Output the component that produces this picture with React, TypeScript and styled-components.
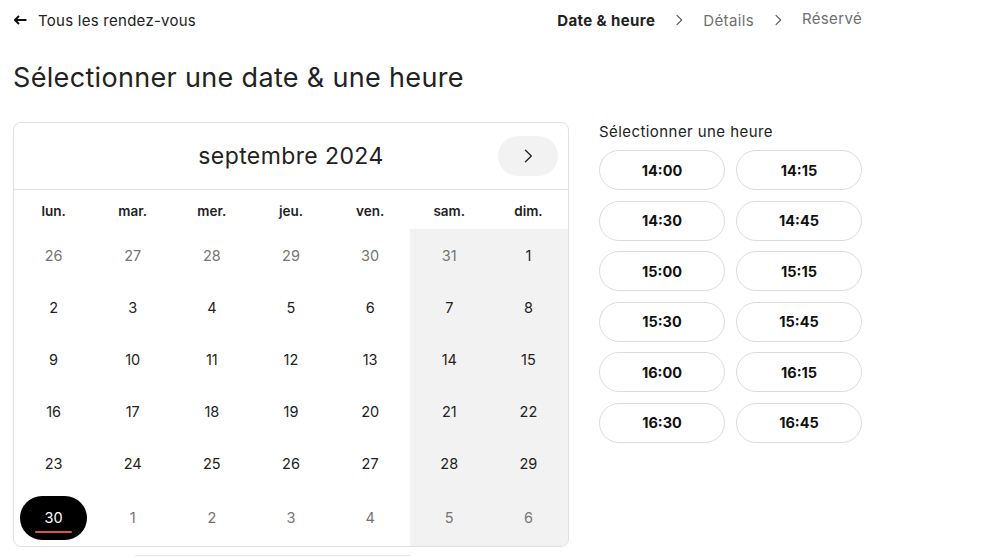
import React from "react";
import styled, { createGlobalStyle } from "styled-components";

const GlobalStyle = createGlobalStyle`
  html, body { margin: 0; padding: 0; background: #ffffff; }
  body { font-family: Inter, "Noto Sans", "Liberation Sans", sans-serif; color: #222; }
  * { box-sizing: border-box; }
`;

const Page = styled.div`
  width: 849px;
  margin-left: 13px;
  padding-top: 6px;
`;

const TopBar = styled.div`
  display: flex;
  justify-content: space-between;
  align-items: center;
  height: 28px;
`;

const BackLink = styled.a`
  display: flex;
  align-items: center;
  gap: 11px;
  padding-left: 1px;
  font-size: 15px;
  letter-spacing: 0.26px;
  color: #222;
  text-decoration: none;
  cursor: pointer;
`;

const Steps = styled.div`
  display: flex;
  align-items: center;
  gap: 16px;
`;

const Step = styled.span<{ $active?: boolean; $lift?: boolean }>`
  font-size: 15px;
  letter-spacing: ${(p) => (p.$active ? "0.4px" : "0.35px")};
  font-weight: ${(p) => (p.$active ? 700 : 400)};
  color: ${(p) => (p.$active ? "#222" : "#6f6f6f")};
  position: relative;
  top: ${(p) => (p.$lift ? "-2px" : "0")};
`;

const Title = styled.h1`
  margin: 28px 0 0 0;
  font-size: 27px;
  line-height: 32px;
  font-weight: 400;
  color: #222;
  letter-spacing: 0.33px;
`;

const Main = styled.div`
  display: flex;
  gap: 30px;
  margin-top: 28px;
  align-items: flex-start;
`;

const LeftCol = styled.div`
  width: 556px;
  display: flex;
  flex-direction: column;
`;

const Card = styled.div`
  width: 556px;
  border: 1px solid #e0e0e0;
  border-radius: 8px;
  overflow: hidden;
  background: #fff;
`;

const CalHeader = styled.div`
  display: grid;
  grid-template-columns: 1fr auto 1fr;
  align-items: center;
  height: 67px;
  border-bottom: 1px solid #e2e2e2;
  padding-right: 10px;
`;

const MonthLabel = styled.div`
  grid-column: 2;
  font-size: 23px;
  letter-spacing: 0.4px;
  color: #222;
  padding-left: 10px;
`;

const NextButton = styled.button`
  grid-column: 3;
  justify-self: end;
  width: 60px;
  height: 40px;
  border: none;
  border-radius: 20px;
  background: #f2f2f2;
  display: flex;
  align-items: center;
  justify-content: center;
  color: #222;
  cursor: pointer;
  padding: 0;
`;

const Grid = styled.div`
  display: grid;
  grid-template-columns: repeat(7, 1fr);
  grid-template-rows: 39px repeat(5, 52px) 57px;
`;

const WeekDay = styled.div`
  display: flex;
  align-items: center;
  justify-content: center;
  font-size: 13.5px;
  font-weight: 600;
  color: #222;
  padding-top: 2px;
`;

const DayCell = styled.div<{ $weekend: boolean }>`
  display: flex;
  align-items: center;
  justify-content: center;
  background: ${(p) => (p.$weekend ? "#f2f2f2" : "transparent")};
`;

const DayNum = styled.span<{ $muted: boolean }>`
  font-size: 14.5px;
  color: ${(p) => (p.$muted ? "#757575" : "#222")};
`;

const Selected = styled.span`
  position: relative;
  width: 67px;
  height: 44px;
  border-radius: 22px;
  background: #000;
  color: #fff;
  font-size: 14.5px;
  display: flex;
  align-items: center;
  justify-content: center;
  &::after {
    content: "";
    position: absolute;
    left: 15px;
    right: 15px;
    bottom: 7px;
    height: 2px;
    background: #d9534f;
    border-radius: 1px;
  }
`;

const BelowLine = styled.div`
  margin-top: 8px;
  margin-left: 122px;
  width: 275px;
  border-top: 1px solid #e4e4e4;
`;

const RightCol = styled.div`
  width: 263px;
  padding-top: 1px;
`;

const TimeLabel = styled.div`
  font-size: 15px;
  letter-spacing: 0.43px;
  line-height: 18px;
  color: #222;
`;

const TimeGrid = styled.div`
  display: grid;
  grid-template-columns: 126px 126px;
  column-gap: 11px;
  row-gap: 10.6px;
  margin-top: 9px;
`;

const TimeButton = styled.button`
  height: 40px;
  border: 1px solid #dcdcdc;
  border-radius: 20px;
  background: #fff;
  font-family: inherit;
  font-size: 14.5px;
  font-weight: 700;
  color: #111;
  cursor: pointer;
`;

const ChevronWrap = styled.span`
  display: flex;
  color: #555;
`;

const weekdays = ["lun.", "mar.", "mer.", "jeu.", "ven.", "sam.", "dim."];

type Day = { n: number; muted: boolean; selected?: boolean };

const days: Day[] = [
  ...[26, 27, 28, 29, 30, 31].map((n) => ({ n, muted: true })),
  ...Array.from({ length: 29 }, (_, i) => ({ n: i + 1, muted: false })),
  { n: 30, muted: false, selected: true },
  ...[1, 2, 3, 4, 5, 6].map((n) => ({ n, muted: true })),
];

const times = ["14:00", "14:15", "14:30", "14:45", "15:00", "15:15", "15:30", "15:45", "16:00", "16:15", "16:30", "16:45"];

const Chevron = ({ size = 16, stroke = 1.6 }: { size?: number; stroke?: number }) => (
  <svg width={size} height={size} viewBox="0 0 24 24" fill="none" stroke="currentColor" strokeWidth={stroke} strokeLinecap="round" strokeLinejoin="round">
    <path d="M9 5l7 7-7 7" />
  </svg>
);

export default function App() {
  return (
    <>
      <GlobalStyle />
      <Page>
        <TopBar>
          <BackLink>
            <svg width="13" height="10" viewBox="0 0 13 10" fill="none">
              <path d="M12.5 5H2" stroke="#111" strokeWidth="2" />
              <path d="M5 1L1 5l4 4" stroke="#111" strokeWidth="2" strokeLinejoin="miter" />
            </svg>
            Tous les rendez-vous
          </BackLink>
          <Steps>
            <Step $active>Date &amp; heure</Step>
            <ChevronWrap><Chevron /></ChevronWrap>
            <Step>Détails</Step>
            <ChevronWrap><Chevron /></ChevronWrap>
            <Step $lift>Réservé</Step>
          </Steps>
        </TopBar>
        <Title>Sélectionner une date &amp; une heure</Title>
        <Main>
          <LeftCol>
            <Card>
              <CalHeader>
                <MonthLabel>septembre 2024</MonthLabel>
                <NextButton aria-label="Mois suivant">
                  <Chevron size={20} stroke={1.6} />
                </NextButton>
              </CalHeader>
              <Grid>
                {weekdays.map((w) => (
                  <WeekDay key={w}>{w}</WeekDay>
                ))}
                {days.map((d, i) => (
                  <DayCell key={i} $weekend={i % 7 >= 5}>
                    {d.selected ? <Selected>{d.n}</Selected> : <DayNum $muted={d.muted}>{d.n}</DayNum>}
                  </DayCell>
                ))}
              </Grid>
            </Card>
            <BelowLine />
          </LeftCol>
          <RightCol>
            <TimeLabel>Sélectionner une heure</TimeLabel>
            <TimeGrid>
              {times.map((t) => (
                <TimeButton key={t}>{t}</TimeButton>
              ))}
            </TimeGrid>
          </RightCol>
        </Main>
      </Page>
    </>
  );
}
